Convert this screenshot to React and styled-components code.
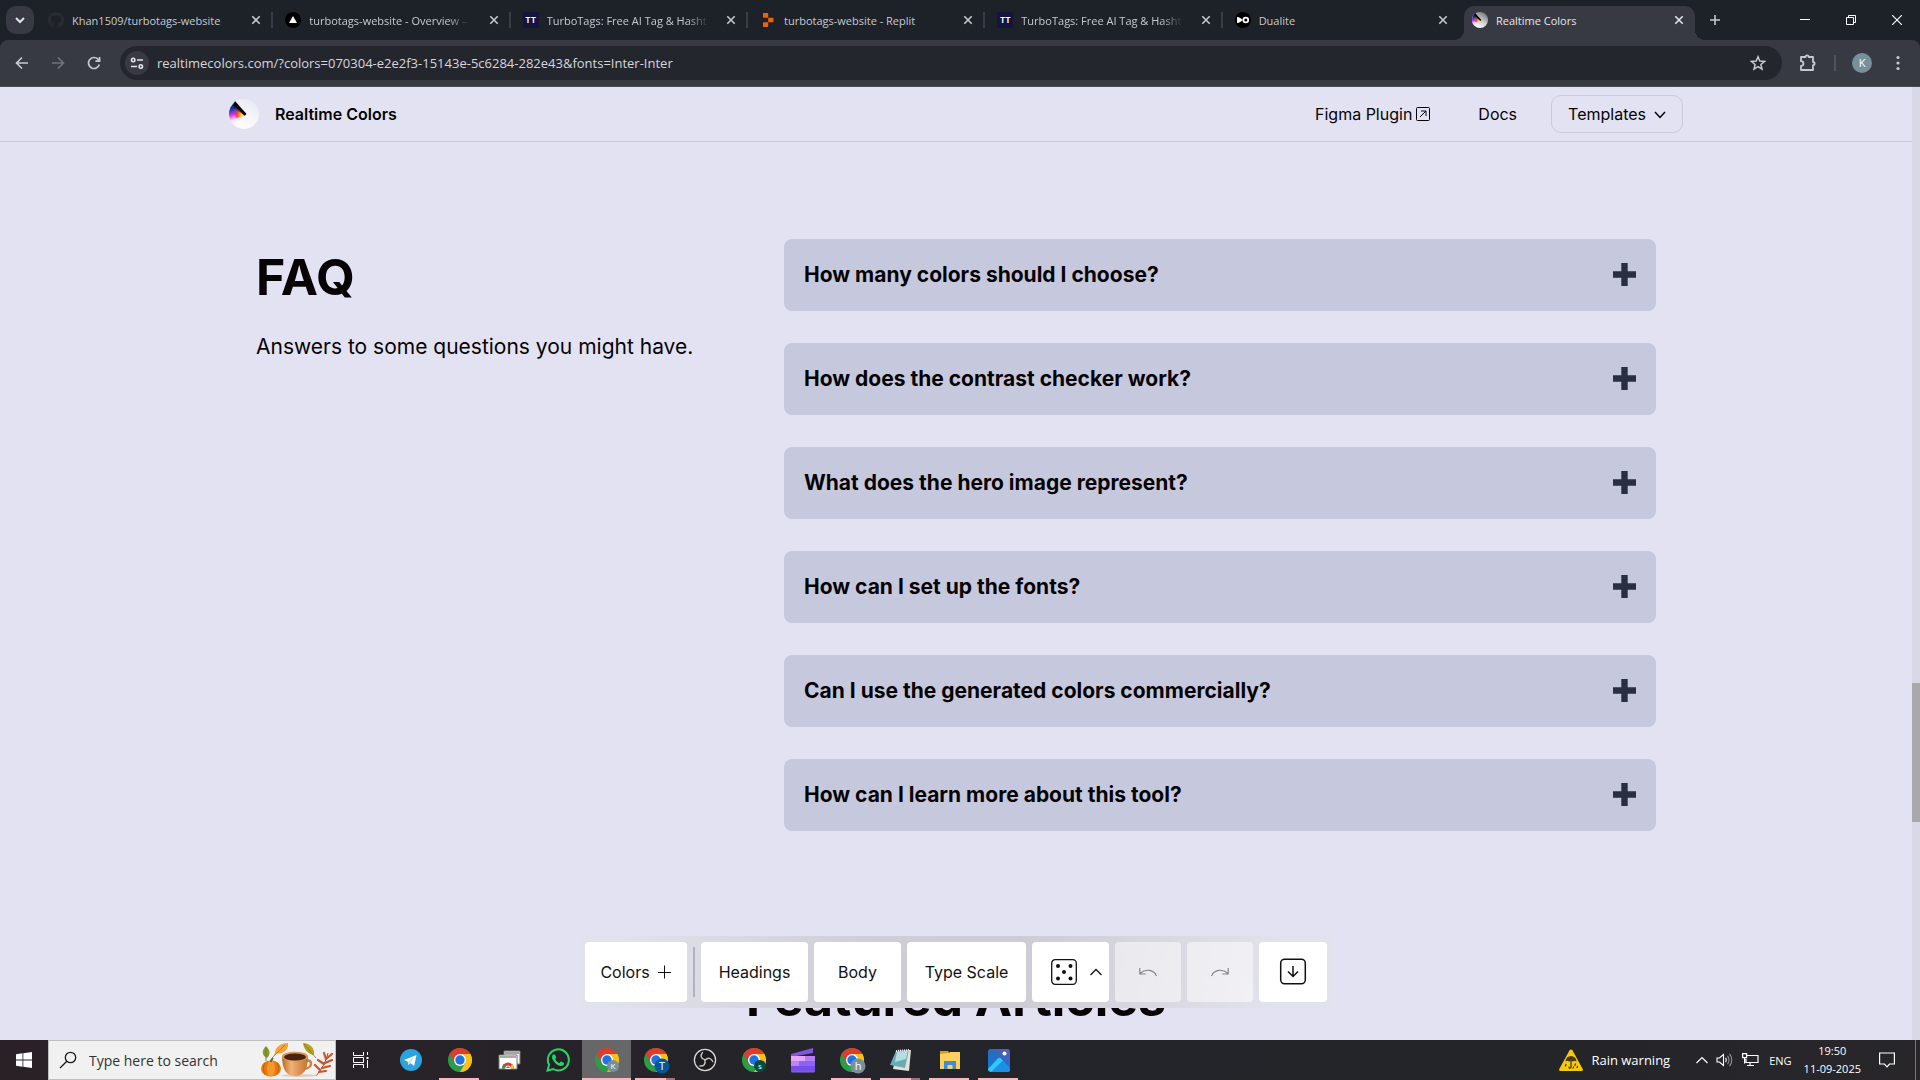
import React from "react";
import styled, { createGlobalStyle, css } from "styled-components";

const uiFont = `"Open Sans", "Noto Sans", sans-serif`;

const GlobalStyle = createGlobalStyle`
  *, *::before, *::after { box-sizing: border-box; }
  html, body { margin: 0; height: 100%; overflow: hidden; }
  body { font-family: Inter, sans-serif; color: #070304; background: #e2e2f3; }
  button, input { font: inherit; color: inherit; }
  button { border: 0; padding: 0; background: none; cursor: pointer; }
  svg { display: block; flex: none; }
  h1, h2, h3, p, ul { margin: 0; padding: 0; }
`;

const Screen = styled.div`
  display: flex;
  flex-direction: column;
  height: 100vh;
`;

/* ---------- browser ---------- */

const TabStrip = styled.header`
  display: flex;
  align-items: flex-end;
  flex: none;
  height: 40px;
  padding-left: 6px;
  background: #1d2128;
  color: #c7c9d1;
  font-family: ${uiFont};
  font-size: 11px;
`;

const TabSearch = styled.button`
  display: grid;
  place-items: center;
  width: 28px;
  height: 28px;
  margin: 0 2px 6px 0;
  border-radius: 10px;
  background: #383a43;
  color: #e4e5ea;
`;

const TabList = styled.div`
  display: flex;
  flex: 0 1 1661px;
  min-width: 0;
`;

const Tab = styled.div`
  position: relative;
  display: flex;
  align-items: center;
  flex: 1 1 0;
  min-width: 0;
  height: 34px;
  padding: 0 9px 6px 12px;

  ${(p) =>
    p.$divided &&
    css`
      &::after {
        content: "";
        position: absolute;
        right: 0;
        top: 6px;
        width: 2px;
        height: 16px;
        background: #3a3c45;
      }
    `}

  ${(p) =>
    p.$active &&
    css`
      flex: 0 1 231px;
      color: #e4e5ea;
      background: #383a43;
      border-radius: 10px 10px 0 0;
      margin: 0 2px 0 4px;
      padding: 0 8px 6px 8px;
      &::before,
      &::after {
        content: "";
        position: absolute;
        bottom: 0;
        width: 10px;
        height: 10px;
      }
      &::before {
        left: -10px;
        background: radial-gradient(circle at 0 0, transparent 10px, #383a43 10px);
      }
      &::after {
        right: -10px;
        background: radial-gradient(circle at 100% 0, transparent 10px, #383a43 10px);
      }
    `}
`;

const TabTitle = styled.span`
  flex: 1;
  min-width: 0;
  margin: 0 8px;
  padding-top: 2px;
  white-space: nowrap;
  line-height: 20px;
`;

const TitleText = styled.span`
  ${(p) =>
    p.$fade &&
    css`
      mask-image: linear-gradient(to right, #000 calc(100% - 20px), rgba(0, 0, 0, 0.1));
    `}
`;

const IconButton = styled.button`
  display: grid;
  place-items: center;
  flex: none;
  width: ${(p) => p.$size}px;
  height: ${(p) => p.$size}px;
  border-radius: 50%;
  color: ${(p) => p.$color || "#c7c9d1"};
  background: ${(p) => p.$fill || "none"};
`;

const NewTabSlot = styled.div`
  margin: 0 auto 6px 4px;
`;

const WindowControls = styled.div`
  display: flex;
  align-self: stretch;
  color: #fff;
`;

const WindowButton = styled.button`
  display: grid;
  place-items: center;
  width: 46px;
`;

const ChromeFrame = styled.div`
  flex: none;
  background: #1d2128;
`;

const AddressBar = styled.div`
  display: flex;
  align-items: center;
  height: 47px;
  padding: 5px 10px 6px;
  background: #383a43;
  border-bottom: 1px solid #4a4b50;
  border-radius: 8px 8px 0 0;
  font-family: ${uiFont};
`;

const NavButtons = styled.div`
  display: flex;
  gap: 12px;
  margin-right: 14px;
`;

const Omnibox = styled.form`
  display: flex;
  align-items: center;
  flex: 1;
  height: 34px;
  padding: 0 12px 0 5px;
  border-radius: 17px;
  background: #24262e;
`;

const UrlInput = styled.input`
  flex: 1;
  min-width: 0;
  height: 24px;
  margin: 0 8px;
  padding: 0;
  border: 0;
  outline: 0;
  background: none;
  color: #d6d7dc;
  font-size: 13px;
`;

const BrowserActions = styled.div`
  display: flex;
  align-items: center;
  gap: 16px;
  padding: 0 2px 0 16px;
`;

const ActionDivider = styled.span`
  width: 2px;
  height: 16px;
  background: #50525b;
`;

const Avatar = styled.button`
  width: 20px;
  height: 20px;
  border-radius: 50%;
  background: #78909c;
  color: #fff;
  font-size: 11px;
  line-height: 20px;
`;

/* ---------- page ---------- */

const Viewport = styled.div`
  display: flex;
  flex: 1;
  min-height: 0;
`;

const Page = styled.div`
  position: relative;
  flex: 1;
  min-width: 0;
  overflow: hidden;
`;

const Scrollbar = styled.div`
  display: grid;
  grid-template-rows: 625fr 146fr 229fr;
  width: 8px;
  background: #d9d8e6;
`;

const ScrollThumb = styled.div`
  grid-row: 2;
  background: #a9a9ad;
`;

const SiteNav = styled.nav`
  height: 55px;
  border-bottom: 1px solid #c9cadc;
  font-size: 16px;
`;

const SiteNavInner = styled.div`
  display: flex;
  align-items: center;
  max-width: 1454px;
  height: 54px;
  margin: 0 auto;
`;

const Brand = styled.a`
  display: flex;
  align-items: center;
  gap: 16px;
  margin-right: auto;
  color: inherit;
  text-decoration: none;
  font-weight: 600;
`;

const SiteLink = styled.a`
  display: flex;
  align-items: center;
  gap: 4px;
  margin-right: ${(p) => p.$after}px;
  color: inherit;
  text-decoration: none;
`;

const TemplatesButton = styled.button`
  display: flex;
  align-items: center;
  gap: 8px;
  height: 38px;
  padding: 0 16px;
  border: 1px solid #c9cadc;
  border-radius: 10px;
`;

const FaqSection = styled.section`
  display: grid;
  grid-template-columns: 443px minmax(0, 872px);
  justify-content: space-between;
  max-width: 1400px;
  margin: 0 auto;
  padding: 97px 0 129px;
`;

const SectionTitle = styled.h2`
  font-size: 50px;
  line-height: 76px;
  font-weight: 700;
  ${(p) => p.$center && "text-align: center;"}
`;

const Lead = styled.p`
  margin-top: 14px;
  font-size: 21px;
  line-height: 36px;
  white-space: nowrap;
`;

const FaqList = styled.div`
  display: flex;
  flex-direction: column;
  gap: 32px;
`;

const FaqItem = styled.button`
  display: flex;
  align-items: center;
  justify-content: space-between;
  height: 72px;
  padding: 0 20px 1px;
  border-radius: 8px;
  background: #c6c9dd;
  font-size: 21px;
  font-weight: 700;
  text-align: left;
`;

const ToolDock = styled.div`
  position: absolute;
  left: 50%;
  bottom: 32px;
  transform: translateX(-50%);
  display: flex;
  align-items: center;
  gap: 6px;
  padding: 6px;
  border-radius: 8px;
  background: linear-gradient(100deg, #e2e2ec 5%, #cfced6 38%, #cdccd4 58%, #e2e2ec 92%);
`;

const ToolButton = styled.button`
  display: flex;
  align-items: center;
  justify-content: center;
  gap: ${(p) => p.$gap || 8}px;
  width: ${(p) => p.$width}px;
  height: 60px;
  padding-left: ${(p) => p.$inset || 0}px;
  border-radius: 4px;
  background: #fff;
  color: #111;
  font-size: 16px;
  &:disabled {
    background: rgba(255, 255, 255, 0.5);
    color: #85858c;
    cursor: default;
  }
`;

const ToolDivider = styled.span`
  width: 2px;
  height: 50px;
  background: #b3b2b9;
`;

/* ---------- taskbar ---------- */

const Taskbar = styled.footer`
  display: flex;
  flex: none;
  height: 40px;
  background: linear-gradient(to right, #2a2126, #242429 40%, #232529 70%, #282629);
  color: #fff;
  font-family: ${uiFont};
`;

const TaskButton = styled.button`
  position: relative;
  display: grid;
  place-items: center;
  width: ${(p) => p.$width || 49}px;
  background: ${(p) => (p.$active ? "#67676a" : "none")};
  ${(p) =>
    p.$open &&
    css`
      &::after {
        content: "";
        position: absolute;
        bottom: 0;
        left: ${p.$active ? 0 : 4}px;
        right: ${p.$active ? 0 : 5}px;
        height: 2px;
        background: ${p.$grouped ? "linear-gradient(to right, #ffb3c0 78%, #9a7580 78%)" : "#ffb3c0"};
      }
    `}
`;

const SearchBox = styled.label`
  display: flex;
  align-items: center;
  gap: 12px;
  width: 288px;
  padding: 0 1px 0 10px;
  border: 1px solid #bfbfbf;
  background: #f1f1f1;
  color: #1a1a1a;
`;

const SearchInput = styled.input`
  flex: 1;
  min-width: 0;
  padding: 0;
  border: 0;
  outline: 0;
  background: none;
  font-size: 14px;
  &::placeholder {
    color: #333;
    opacity: 1;
  }
`;

const Tray = styled.div`
  display: flex;
  align-items: center;
  gap: 8px;
  margin-left: auto;
`;

const Weather = styled.button`
  display: flex;
  align-items: center;
  gap: 8px;
  margin-right: 18px;
  font-size: 13px;
`;

const Language = styled.button`
  font-size: 11px;
  margin: 0 4px 0 2px;
`;

const Clock = styled.button`
  font-size: 11px;
  line-height: 18px;
  text-align: center;
  margin-right: 10px;
`;

const DesktopEdge = styled.span`
  align-self: stretch;
  width: 5px;
  margin-left: 12px;
  border-left: 1px solid #77777a;
`;

/* ---------- drawings ---------- */

const Line = ({ w = 16, h, box, sw = 1.5, children, ...rest }) => (
  <svg width={w} height={h || w} viewBox={box || `0 0 ${w} ${h || w}`} fill="none" stroke="currentColor" strokeWidth={sw} aria-hidden="true" {...rest}>
    {children}
  </svg>
);

const CloseIcon = () => (
  <Line w={16} sw={1.6}>
    <path d="M4.3 4.3l7.4 7.4M11.7 4.3l-7.4 7.4" />
  </Line>
);

const GithubIcon = () => (
  <svg width="16" height="16" viewBox="0 0 16 16" fill="#292c31" aria-hidden="true">
    <path d="M8 0C3.58 0 0 3.58 0 8c0 3.54 2.29 6.53 5.47 7.59.4.07.55-.17.55-.38v-1.49c-2.01.37-2.53-.49-2.69-.94-.09-.23-.48-.94-.82-1.13-.28-.15-.68-.52-.01-.53.63-.01 1.08.58 1.23.82.72 1.21 1.87.87 2.33.66.07-.52.28-.87.51-1.07-1.78-.2-3.64-.89-3.64-3.95 0-.87.31-1.59.82-2.15-.08-.2-.36-1.02.08-2.12 0 0 .67-.21 2.2.82a7.6 7.6 0 014 0c1.53-1.04 2.2-.82 2.2-.82.44 1.1.16 1.92.08 2.12.51.56.82 1.27.82 2.15 0 3.07-1.87 3.75-3.65 3.95.29.25.54.73.54 1.48v2.19c0 .21.15.46.55.38A8 8 0 0016 8c0-4.42-3.58-8-8-8z" />
  </svg>
);

const VercelIcon = () => (
  <svg width="16" height="16" viewBox="0 0 16 16" aria-hidden="true">
    <circle cx="8" cy="8" r="8" fill="#000" />
    <path d="M8 4l4 7H4z" fill="#fff" />
  </svg>
);

const TurboBadge = styled.span`
  display: grid;
  place-items: center;
  flex: none;
  width: 16px;
  height: 16px;
  background: #15143e;
  color: #fff;
  font-family: Inter, sans-serif;
  font-size: 8px;
  font-weight: 700;
  line-height: 16px;
`;

const ReplitIcon = () => (
  <svg width="16" height="16" viewBox="0 0 16 16" fill="#f26207" aria-hidden="true">
    <path d="M3 1.800c0-.5.3-.8.800-.8h3.600c.5 0 .8.300.8.800V5.700H3.800a.8.800 0 01-.8-.8zM8.200 5.700h4.500c.5 0 .8.300.8.800v3c0 .5-.3.800-.8.800H8.200zM3 11.100c0-.5.3-.8.800-.8h4.400v3.900c0 .5-.3.800-.8.800H3.800a.8.800 0 01-.8-.8z" />
  </svg>
);

const DualiteIcon = () => (
  <svg width="16" height="16" viewBox="0 0 16 16" aria-hidden="true">
    <circle cx="8" cy="8" r="8" fill="#000" />
    <path d="M2 5c2.500 0 4 1.500 6 3-2 1.500-3.500 3-6 3z" fill="#fff" />
    <circle cx="10.800" cy="8" r="2.400" fill="none" stroke="#fff" strokeWidth="1.700" />
  </svg>
);

const RealtimeLogo = ({ size, id, dark }) => (
  <svg width={size} height={size} viewBox="0 0 30 30" aria-hidden="true">
    <defs>
      <linearGradient id={`${id}-disc`} x1="1" y1="0" x2="0.4" y2="1">
        <stop offset="0" stopColor={dark ? "#5f6066" : "#e6e6f3"} />
        <stop offset="0.6" stopColor={dark ? "#cfcfcf" : "#f6f6fc"} />
        <stop offset="1" stopColor="#fff" />
      </linearGradient>
      <linearGradient id={`${id}-hue`} x1="2" y1="5" x2="9" y2="25" gradientUnits="userSpaceOnUse">
        <stop offset="0" stopColor="#060b50" />
        <stop offset="0.25" stopColor="#1b3bb0" />
        <stop offset="0.5" stopColor="#d23be0" />
        <stop offset="0.75" stopColor="#f8d4f8" />
        <stop offset="1" stopColor="#fff" stopOpacity="0" />
      </linearGradient>
      <radialGradient id={`${id}-warm`} cx="15" cy="16" r="11" gradientUnits="userSpaceOnUse">
        <stop offset="0" stopColor="#fff36a" />
        <stop offset="0.35" stopColor="#ffb320" />
        <stop offset="0.65" stopColor="#f03a2a" stopOpacity="0.85" />
        <stop offset="1" stopColor="#c02ad0" stopOpacity="0" />
      </radialGradient>
    </defs>
    <circle cx="15" cy="15" r="15" fill={`url(#${id}-disc)`} />
    <path d="M15.500 15.500L6 3A15 15 0 006 27z" fill={`url(#${id}-hue)`} />
    <path d="M15.500 16.500L6.500 4 3 12l4 7z" fill={`url(#${id}-warm)`} />
    <path d="M5 2.500l12 12-1.500 2L4 9z" fill="#0a0608" opacity="0.300" />
    <path d="M6 2l11.500 13-1.800 1.800L5 6.500z" fill="#050304" />
  </svg>
);

const ChromeLogo = ({ badge, badgeFill, badgeSize = 11 }) => (
  <svg width="28" height="28" viewBox="0 0 28 28" aria-hidden="true">
    <circle cx="14" cy="14" r="12" fill="#2a9d46" />
    <path d="M14 14L3.600 8A12 12 0 0124.400 8H14z" fill="#e23a2e" />
    <path d="M3.600 8l5.200 9L14 8z" fill="#e23a2e" />
    <path d="M24.400 8A12 12 0 0114 26l5.200-9L14 8z" fill="#fbc116" />
    <circle cx="14" cy="14" r="6" fill="#fff" />
    <circle cx="14" cy="14" r="4.700" fill="#1f73e8" />
    {badge && (
      <>
        <circle cx="20" cy="20" r={badgeSize / 2 + 1} fill={badgeFill} />
        <text x="20" y={20 + badgeSize * 0.33} textAnchor="middle" fontSize={badgeSize - 2} fill="#fff" fontFamily="Open Sans, sans-serif">
          {badge}
        </text>
      </>
    )}
  </svg>
);

const AutumnArt = () => (
  <svg width="74" height="36" viewBox="0 0 74 36" aria-hidden="true">
    <defs>
      <linearGradient id="cup" x1="0" x2="1">
        <stop offset="0" stopColor="#b86a2b" />
        <stop offset="0.35" stopColor="#efb276" />
        <stop offset="1" stopColor="#c27331" />
      </linearGradient>
    </defs>
    <path d="M6 4c4 4 5 8 1 12-6-3-5-8-1-12z" fill="#8b9a2a" />
    <path d="M6 6v13" stroke="#667320" strokeWidth="0.800" />
    <path d="M15 11C15 5 21 1 28 1c1 6-4 11-11 10.500l-4 3.500z" fill="#f3a338" />
    <path d="M25 3L12 16" stroke="#c96d16" strokeWidth="0.800" />
    <path d="M43 1c7 0 12 5 11 12-6-1-10-5-11-12z" fill="#b7a126" />
    <path d="M44 2l12 14" stroke="#7d7420" strokeWidth="0.800" />
    <path d="M68 11C66 20 61 28 56 34" stroke="#a94320" strokeWidth="1" fill="none" />
    <path d="M66 17l6-5M65 21l7-3M62 26l8-2M66 17l-2-6M64 22l-6-4M60 28l-5-5M59 30l7-1" stroke="#c9532a" strokeWidth="2.200" strokeLinecap="round" fill="none" />
    <ellipse cx="39" cy="33.500" rx="18" ry="1.500" fill="#dccfc1" />
    <ellipse cx="11" cy="26.500" rx="10" ry="8" fill="#e67a12" />
    <ellipse cx="11" cy="26.500" rx="4" ry="8" fill="#f6982c" />
    <path d="M5 21c-2 3-2 8 0 11M17 21c2 3 2 8 0 11" stroke="#c75f0b" fill="none" />
    <path d="M11 20c0-2 1-3 2-4" stroke="#6d6b1f" strokeWidth="2" fill="none" />
    <path d="M46 19c6-3 8 7-2 8" fill="none" stroke="#c98243" strokeWidth="2.500" />
    <path d="M22 14c0 13 4 20 13 20s13-7 13-20z" fill="url(#cup)" />
    <ellipse cx="35" cy="14.500" rx="13" ry="4.800" fill="#d99657" />
    <ellipse cx="35" cy="15" rx="11" ry="3.600" fill="#4a230e" />
  </svg>
);

const TaskViewIcon = () => (
  <Line w={16} sw={1}>
    <path d="M.5 0v3.500h10V0M.5 16v-3.500h10V16M.5 5.500h10v5H.5zM14.500 0v3M14.500 8v8" />
    <path d="M13.500 5h2v2h-2z" fill="currentColor" stroke="none" />
  </Line>
);

const TelegramIcon = () => (
  <svg width="22" height="22" viewBox="0 0 22 22" aria-hidden="true">
    <circle cx="11" cy="11" r="11" fill="#2ba3dc" />
    <path d="M4 11l12.500-5-2.300 11-4-3-2 2-.6-3.500z" fill="#fff" />
    <path d="M8 12.500l6-4-4 5.300-2 2.200z" fill="#c7dff0" />
  </svg>
);

const WebStoreIcon = () => (
  <svg width="24" height="24" viewBox="0 0 24 24" aria-hidden="true">
    <path d="M7 3h16v13H7z" fill="#f1f1f1" stroke="#777" />
    <path d="M8 4h14v2H8z" fill="#a4a4a4" />
    <path d="M2 7h18v14H2z" fill="#fff" stroke="#777" />
    <path d="M3 8h16v2H3z" fill="#aaa" />
    <path d="M5 20.500a6 6 0 0112 0z" fill="#e33b2e" />
    <path d="M5 20.500a6 6 0 012-4.500l3 4.500z" fill="#2a9d46" />
    <path d="M13 20.500l2-4.500a6 6 0 012 4.500z" fill="#fbc116" />
    <path d="M8.500 20.500a2.500 2.500 0 015 0z" fill="#1f73e8" stroke="#fff" />
  </svg>
);

const WhatsAppIcon = () => (
  <svg width="24" height="24" viewBox="0 0 24 24" aria-hidden="true">
    <path d="M1.500 22.500l1.600-5.700A10.500 10.500 0 117.200 21z" fill="none" stroke="#25d366" strokeWidth="2" />
    <path d="M8 6.200c-.8 0-2 1.200-2 3 0 3.500 5.300 8.800 9 8.800 1.900 0 3.100-1.500 3.100-2.600 0-.6-2.600-1.900-3.100-1.900-.6 0-1.100 1.500-1.700 1.500-.9 0-4-2.900-4-3.800 0-.5 1-.9 1-1.600 0-.5-1-3.400-2.300-3.400z" fill="#25d366" />
  </svg>
);

const ObsIcon = () => (
  <svg width="24" height="24" viewBox="0 0 24 24" aria-hidden="true">
    <circle cx="12" cy="12" r="10.600" fill="#1d1b1d" stroke="#d8d8d8" strokeWidth="1.300" />
    <g fill="none" stroke="#c4c4c4" strokeWidth="1.400" strokeLinecap="round">
      <path id="obs-blade" d="M12 11.800C8 11 7 7.500 9.500 4.500" />
      <path d="M12 11.800C8 11 7 7.500 9.500 4.500" transform="rotate(120 12 12)" />
      <path d="M12 11.800C8 11 7 7.500 9.500 4.500" transform="rotate(240 12 12)" />
    </g>
  </svg>
);

const ClipchampIcon = () => (
  <svg width="26" height="26" viewBox="0 0 26 26" aria-hidden="true">
    <path d="M1 7L23 1v5L1 10z" fill="#8156dd" />
    <path d="M1 9h24v15a1.500 1.500 0 01-1.500 1.500h-21A1.500 1.500 0 011 24z" fill="#8d63f4" />
    <path d="M1 9h14v5H1z" fill="#e6a4fa" />
    <path d="M15 9h10v5H15z" fill="#b77df6" />
    <path d="M1 14h8v5H1z" fill="#bd83fb" />
    <path d="M1 19h24v5.500H1z" fill="#7045e8" opacity="0.700" />
  </svg>
);

const NotepadIcon = () => (
  <svg width="24" height="24" viewBox="0 0 24 24" aria-hidden="true">
    <path d="M8 3l14-1-2 21-16-2z" fill="#e5e2d5" />
    <path d="M7 3l13-1-4 18L1 17z" fill="#69acb9" />
    <path d="M8 4l11-1-2 8-11 3z" fill="#b6dde2" />
    <path d="M7 3l13-1" stroke="#eee" strokeWidth="2" strokeDasharray="1 1" />
  </svg>
);

const ExplorerIcon = () => (
  <svg width="24" height="24" viewBox="0 0 24 24" aria-hidden="true">
    <path d="M2 3h8l2 3H2z" fill="#e09a12" />
    <path d="M2 6l9-1 1-1h10v17H2z" fill="#ffd25e" />
    <path d="M6 21v-8h12v8h-3.500v-4h-5v4z" fill="#3c8ed6" />
  </svg>
);

const PhotosIcon = () => (
  <svg width="24" height="24" viewBox="0 0 24 24" aria-hidden="true">
    <defs>
      <linearGradient id="photo-sky" x1="0" y1="1" x2="1" y2="0">
        <stop offset="0" stopColor="#1476d3" />
        <stop offset="0.5" stopColor="#256dc2" />
        <stop offset="1" stopColor="#6756b5" />
      </linearGradient>
    </defs>
    <rect x="1" y="1" width="22" height="23" rx="2.500" fill="url(#photo-sky)" />
    <path d="M1 21L11 10.500c1-1 2-1 3 0L23 20v1.500a2.500 2.500 0 01-2.500 2.500h-17z" fill="#1a91e6" />
    <path d="M1 21L11 10.500c1-1 2-1 3 0l2 2L4 24 1 22z" fill="#31c6f4" />
    <circle cx="17.500" cy="5.500" r="2" fill="#fff" />
  </svg>
);

const WarningIcon = () => (
  <svg width="24" height="22" viewBox="0 0 24 22" aria-hidden="true">
    <path d="M12 .5c.8 0 1.200.4 1.600 1L23.700 20c.5 1-.1 2-1.200 2h-21C.4 22-.2 21 .3 20L10.400 1.500c.4-.6.8-1 1.600-1z" fill="#f7c90e" />
    <path d="M6.500 12.500a5.500 5.500 0 0111 0l-1.800-.8-1.800.8-1.900-.8-1.900.8-1.800-.8z" fill="#4a3a12" />
    <path d="M12 12v6c0 1.500-2 1.500-2 .2M7 15.500l-.6 1.500M16.500 15l-.7 1.500M14.500 18l-.5 1M18.500 17.500l-.5 1" stroke="#4a3a12" strokeWidth="1.300" fill="none" strokeLinecap="round" />
  </svg>
);

const PlusMark = () => (
  <svg width="23" height="23" viewBox="0 0 23 23" fill="#282e43" aria-hidden="true">
    <path d="M8.300 0h6.400v8.300H23v6.400h-8.300V23H8.300v-8.300H0V8.300h8.300z" />
  </svg>
);

/* ---------- content ---------- */

const tabs = [
  { title: "Khan1509/turbotags-website", icon: <GithubIcon /> },
  { title: "turbotags-website - Overview –", icon: <VercelIcon />, fade: true },
  { title: "TurboTags: Free AI Tag & Hasht", icon: <TurboBadge>TT</TurboBadge>, fade: true },
  { title: "turbotags-website - Replit", icon: <ReplitIcon /> },
  { title: "TurboTags: Free AI Tag & Hasht", icon: <TurboBadge>TT</TurboBadge>, fade: true },
  { title: "Dualite", icon: <DualiteIcon /> },
  { title: "Realtime Colors", icon: <RealtimeLogo size={16} id="tab-logo" dark />, active: true },
];

const questions = [
  "How many colors should I choose?",
  "How does the contrast checker work?",
  "What does the hero image represent?",
  "How can I set up the fonts?",
  "Can I use the generated colors commercially?",
  "How can I learn more about this tool?",
];

const apps = [
  { name: "Task View", icon: <TaskViewIcon />, width: 50 },
  { name: "Telegram", icon: <TelegramIcon /> },
  { name: "Chrome", icon: <ChromeLogo />, open: true },
  { name: "Web Store", icon: <WebStoreIcon /> },
  { name: "WhatsApp", icon: <WhatsAppIcon /> },
  { name: "Chrome, profile K", icon: <ChromeLogo badge="K" badgeFill="#78909c" badgeSize={10} />, open: true, active: true },
  { name: "Chrome, profile T", icon: <ChromeLogo badge="T" badgeFill="#01579b" badgeSize={13} />, open: true, grouped: true },
  { name: "OBS Studio", icon: <ObsIcon /> },
  { name: "Chrome, profile S", icon: <ChromeLogo badge="s" badgeFill="#004d40" badgeSize={10} /> },
  { name: "Clipchamp", icon: <ClipchampIcon /> },
  { name: "Chrome, profile H", icon: <ChromeLogo badge="h" badgeFill="#78909c" badgeSize={13} />, open: true },
  { name: "Notepad", icon: <NotepadIcon />, open: true, grouped: true },
  { name: "File Explorer", icon: <ExplorerIcon />, open: true },
  { name: "Photos", icon: <PhotosIcon />, open: true },
];

const Browser = () => (
  <ChromeFrame>
    <TabStrip>
      <TabSearch aria-label="Search tabs">
        <Line w={12} sw={2}><path d="M2 4l4 4 4-4" /></Line>
      </TabSearch>
      <TabList>
        {tabs.map((t, i) => (
          <Tab key={i} $active={t.active} $divided={i < 5}>
            {t.icon}
            <TabTitle><TitleText $fade={t.fade}>{t.title}</TitleText></TabTitle>
            <IconButton $size={16} $color="inherit" aria-label="Close tab"><CloseIcon /></IconButton>
          </Tab>
        ))}
      </TabList>
      <NewTabSlot>
        <IconButton $size={28} aria-label="New tab">
          <Line w={12} sw={1.6}><path d="M6 1v10M1 6h10" /></Line>
        </IconButton>
      </NewTabSlot>
      <WindowControls>
        <WindowButton aria-label="Minimize"><Line w={10} sw={1}><path d="M0 4.500h10" /></Line></WindowButton>
        <WindowButton aria-label="Restore"><Line w={10} sw={1}><path d="M.5 2.500h7v7h-7zM2.500 2.500v-2h7v7h-2" /></Line></WindowButton>
        <WindowButton aria-label="Close"><Line w={10} sw={1.1}><path d="M0 0l10 10M10 0L0 10" /></Line></WindowButton>
      </WindowControls>
    </TabStrip>
    <AddressBar>
      <NavButtons>
        <IconButton $size={24} aria-label="Back"><Line w={14} sw={1.700}><path d="M13 7H2M7 1.500L1.500 7 7 12.500" /></Line></IconButton>
        <IconButton $size={24} $color="#70727a" aria-label="Forward"><Line w={14} sw={1.700}><path d="M1 7h11M7 1.500L12.500 7 7 12.500" /></Line></IconButton>
        <IconButton $size={24} aria-label="Reload"><Line w={14} sw={1.700}><path d="M12.300 8.500a5.500 5.500 0 11-1.300-5.300l1.500 1.500M12.600 1v4.200H8.400" /></Line></IconButton>
      </NavButtons>
      <Omnibox>
        <IconButton $size={24} $fill="#383a43" $color="#e4e5ea" type="button" aria-label="Site information">
          <Line w={14} sw={1.600}><circle cx="3.200" cy="4" r="1.700" /><path d="M7 4h6M1 10.500h6" /><circle cx="10.800" cy="10.500" r="1.700" /></Line>
        </IconButton>
        <UrlInput aria-label="Address" defaultValue="realtimecolors.com/?colors=070304-e2e2f3-15143e-5c6284-282e43&fonts=Inter-Inter" />
        <IconButton $size={24} type="button" aria-label="Bookmark">
          <Line w={16} sw={1.500}><path d="M8 1.800l1.800 4.300 4.700.4-3.600 3 1.100 4.600L8 11.600l-4 2.500 1.100-4.600-3.600-3 4.700-.4z" /></Line>
        </IconButton>
      </Omnibox>
      <BrowserActions>
        <IconButton $size={20} aria-label="Extensions">
          <Line w={18} sw={1.800}><path d="M2 3h4.500a1.600 1.600 0 013.200 0H14v5a1.600 1.600 0 010 3.200V16H2v-4a2.400 2.400 0 000-4.800z" strokeLinejoin="round" /></Line>
        </IconButton>
        <ActionDivider />
        <Avatar aria-label="Profile K">K</Avatar>
        <IconButton $size={20} aria-label="Menu">
          <svg width="4" height="16" viewBox="0 0 4 16" fill="currentColor" aria-hidden="true"><circle cx="2" cy="2.500" r="1.600" /><circle cx="2" cy="8" r="1.600" /><circle cx="2" cy="13.500" r="1.600" /></svg>
        </IconButton>
      </BrowserActions>
    </AddressBar>
  </ChromeFrame>
);

const SitePage = () => (
  <Viewport>
    <Page>
      <SiteNav>
        <SiteNavInner>
          <Brand href="#home"><RealtimeLogo size={30} id="nav-logo" />Realtime Colors</Brand>
          <SiteLink href="#figma" $after={48}>
            Figma Plugin
            <Line w={14} sw={1}><rect x="0.500" y="0.500" width="13" height="13" rx="1" /><path d="M4 10l6-6M5 4h5v5" /></Line>
          </SiteLink>
          <SiteLink href="#docs" $after={34}>Docs</SiteLink>
          <TemplatesButton>
            Templates
            <Line w={12} sw={1.500}><path d="M1 4l5 5.500L11 4" /></Line>
          </TemplatesButton>
        </SiteNavInner>
      </SiteNav>
      <main>
        <FaqSection>
          <div>
            <SectionTitle>FAQ</SectionTitle>
            <Lead>Answers to some questions you might have.</Lead>
          </div>
          <FaqList>
            {questions.map((q) => (
              <FaqItem key={q} aria-expanded="false">{q}<PlusMark /></FaqItem>
            ))}
          </FaqList>
        </FaqSection>
        <SectionTitle $center>Featured Articles</SectionTitle>
      </main>
      <ToolDock>
        <ToolButton $width={102}>Colors<Line w={14} sw={1}><path d="M6.500 .5v13M0 7.500h13" /></Line></ToolButton>
        <ToolDivider />
        <ToolButton $width={107}>Headings</ToolButton>
        <ToolButton $width={87}>Body</ToolButton>
        <ToolButton $width={119}>Type Scale</ToolButton>
        <ToolButton $width={77} $gap={12} $inset={11} aria-label="Randomize">
          <Line w={28} sw={1.300}>
            <rect x="1.700" y="1.700" width="24.600" height="24.600" rx="3.500" />
            <g fill="currentColor" stroke="none"><circle cx="8" cy="8" r="2" /><circle cx="20.500" cy="8" r="2" /><circle cx="14" cy="14" r="2" /><circle cx="8" cy="20.500" r="2" /><circle cx="20.500" cy="20.500" r="2" /></g>
          </Line>
          <Line w={12} sw={1.300}><path d="M.5 9L6 3.500 11.500 9" /></Line>
        </ToolButton>
        <ToolButton $width={66} disabled aria-label="Undo"><Line w={18} h={10} sw={1.200}><path d="M17.500 9C15 3 7 1 1 6.500M.8 1v6h6" /></Line></ToolButton>
        <ToolButton $width={66} disabled aria-label="Redo"><Line w={18} h={10} sw={1.200}><path d="M.5 9C3 3 11 1 17 6.500M17.200 1v6h-6" /></Line></ToolButton>
        <ToolButton $width={68} aria-label="Export"><Line w={28} sw={1.500}><rect x="1.700" y="1.200" width="24.600" height="24.600" rx="4" /><path d="M14 8v10.500M9 13.500l5 5 5-5" /></Line></ToolButton>
      </ToolDock>
    </Page>
    <Scrollbar><ScrollThumb /></Scrollbar>
  </Viewport>
);

const DesktopBar = () => (
  <Taskbar>
    <TaskButton $width={48} aria-label="Start">
      <svg width="16" height="16" viewBox="0 0 16 16" fill="#fff" aria-hidden="true"><path d="M0 2.200l6.500-.9v6.300H0zM7.300 1.200L16 0v7.600H7.300zM0 8.400h6.500v6.300L0 13.800zM7.300 8.400H16V16l-8.700-1.200z" /></svg>
    </TaskButton>
    <SearchBox>
      <Line w={18} sw={1.300}><circle cx="11.500" cy="6.500" r="5.200" /><path d="M7.800 10.200L1 17" /></Line>
      <SearchInput type="text" aria-label="Search" placeholder="Type here to search" />
      <AutumnArt />
    </SearchBox>
    {apps.map((a) => (
      <TaskButton key={a.name} aria-label={a.name} $width={a.width} $open={a.open} $active={a.active} $grouped={a.grouped}>{a.icon}</TaskButton>
    ))}
    <Tray>
      <Weather><WarningIcon />Rain warning</Weather>
      <Line w={12} sw={1.200}><path d="M.5 9L6 3.500 11.500 9" /></Line>
      <Line w={18} h={14} sw={1.100}><path d="M1 5h2.500L7.500 1.500v11L3.500 9H1zM9.500 5c1 1 1 3 0 4" /><path d="M11.500 3c2 2 2 6 0 8M13.500 1c3 3 3 9 0 12" opacity="0.500" /></Line>
      <Line w={17} h={14} sw={1.200}><path d="M5 2.500h11v7H4V6M8 9.500v3M5 12.500h7M.6.600h4v4h-4zM2.600 4.600v6" /></Line>
      <Language>ENG</Language>
      <Clock>19:50<br />11-09-2025</Clock>
      <Line w={16} sw={1.200}><path d="M.6 1h14.800v11H10.500L8 14.800 5.500 12H.6z" /></Line>
      <DesktopEdge />
    </Tray>
  </Taskbar>
);

export default function App() {
  return (
    <Screen>
      <GlobalStyle />
      <Browser />
      <SitePage />
      <DesktopBar />
    </Screen>
  );
}
